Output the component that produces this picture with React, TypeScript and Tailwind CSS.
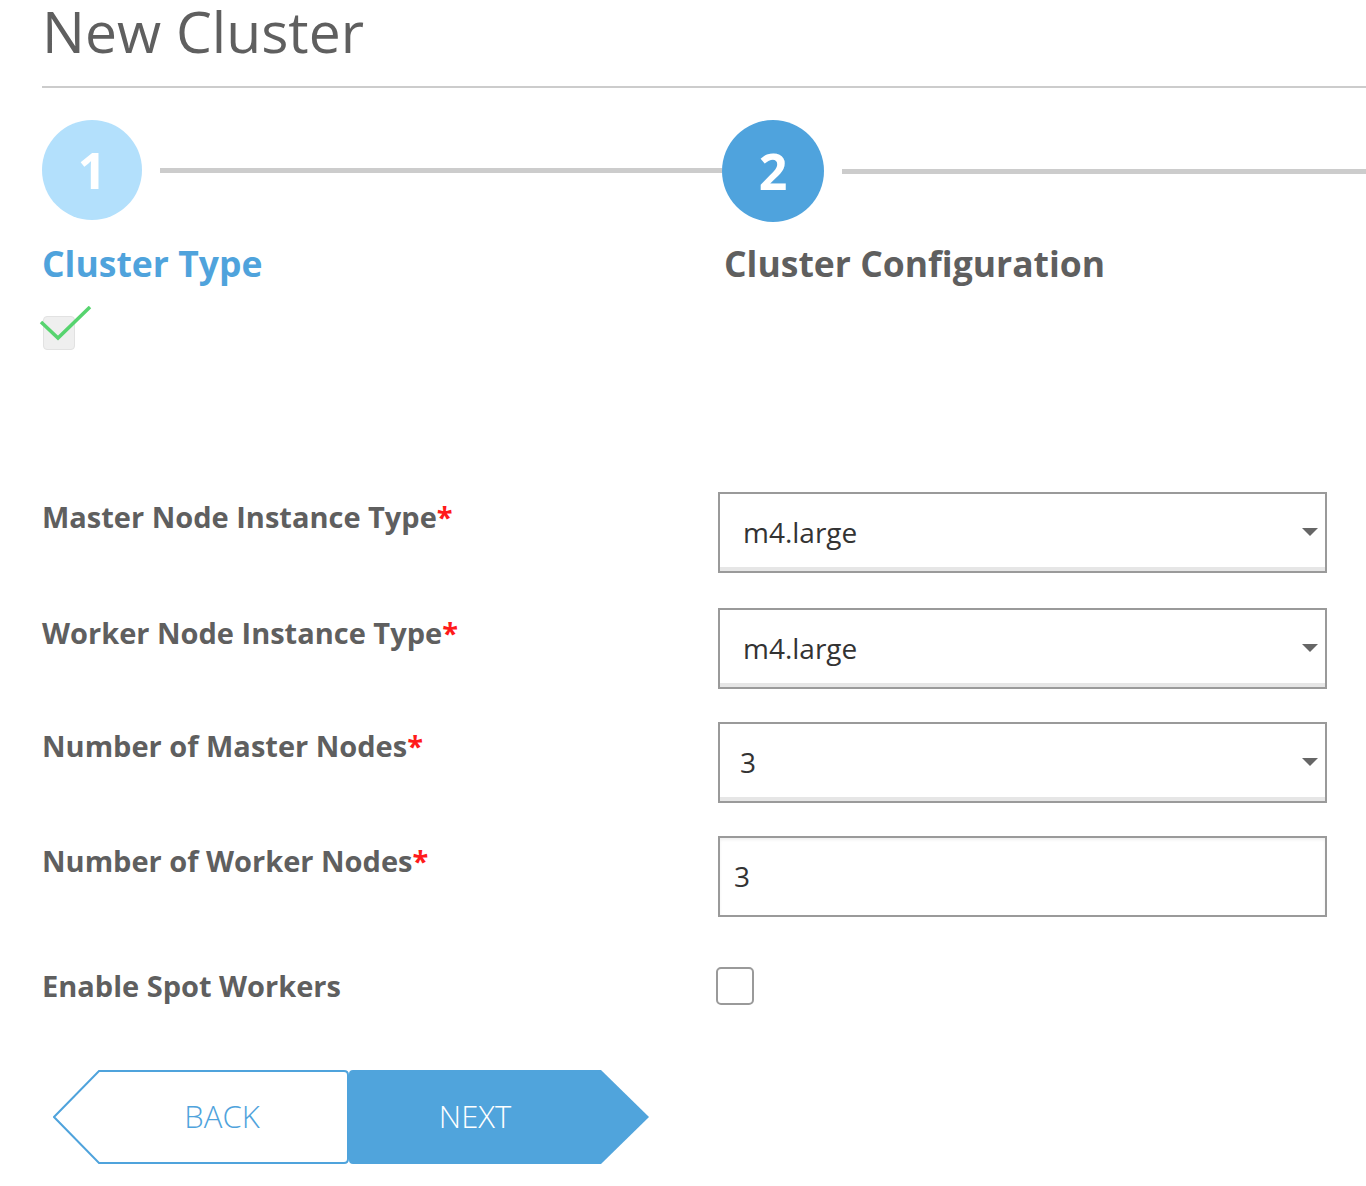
import React from "react";

const font = { fontFamily: '"Open Sans", "Liberation Sans", sans-serif' };

function Caret() {
  return (
    <svg width="18" height="10" viewBox="0 0 18 10" className="shrink-0">
      <path d="M1 1 L17 1 L9 9 Z" fill="#666" />
    </svg>
  );
}

function SelectBox({ value, pad = "pl-[23px]" }: { value: string; pad?: string }) {
  return (
    <div className="flex h-[81px] w-[609px] items-center justify-between border-2 border-[#9a9a9a] bg-white pr-[6px] shadow-[inset_0_-4px_0_#e6e6e6]">
      <span className={`${pad} text-[28px] text-[#333]`}>{value}</span>
      <Caret />
    </div>
  );
}

function Label({ text, req = true }: { text: string; req?: boolean }) {
  return (
    <div className="w-[676px] text-[29px] font-bold leading-none text-[#5f5f5f]">
      {text}
      {req && <span className="text-[#ff1a1a]">*</span>}
    </div>
  );
}

export default function App() {
  return (
    <div className="min-h-[1186px] w-[1366px] bg-white" style={font}>
      <div className="pl-[42px]">
        <h1 className="pt-[3px] text-[57px] font-normal leading-none text-[#5f5f5f]">New Cluster</h1>
        <div className="mt-[26px] h-[2px] bg-[#cccccc]" />

        {/* Stepper */}
        <div className="mt-[32px] flex">
          <div className="w-[680px]">
            <div className="flex items-center">
              <div className="flex h-[100px] w-[100px] shrink-0 items-center justify-center rounded-full bg-[#b3e0fc] text-[50px] font-bold text-white">
                1
              </div>
              <div className="ml-[18px] h-[5px] flex-1 bg-[#cccccc]" />
            </div>
            <div className="mt-[26px] text-[35.5px] font-bold leading-none text-[#4fa3dc]">Cluster Type</div>
            <div className="relative mt-[26px] h-[34px] w-[34px]">
              <div className="absolute left-[1px] top-[8px] h-[34px] w-[32px] rounded-[4px] border border-[#e2e2e2] bg-[#efefef]" />
              <svg className="absolute -left-[3px] -top-[2px]" width="56" height="42" viewBox="0 0 56 42">
                <path d="M2 16 L19 32 L51 1" stroke="#57d46f" strokeWidth="3.5" fill="none" />
              </svg>
            </div>
          </div>
          <div className="flex-1">
            <div className="flex items-center">
              <div className="flex h-[102px] w-[102px] shrink-0 items-center justify-center rounded-full bg-[#4fa3dd] text-[50px] font-bold text-white">
                2
              </div>
              <div className="ml-[18px] h-[5px] flex-1 bg-[#cccccc]" />
            </div>
            <div className="ml-[2px] mt-[24px] text-[35.5px] font-bold leading-none text-[#5f5f5f]">Cluster Configuration</div>
          </div>
        </div>

        {/* Form */}
        <div className="mt-[150px] flex flex-col">
          <div className="flex items-start">
            <div className="pt-[10px]"><Label text="Master Node Instance Type" /></div>
            <SelectBox value="m4.large" />
          </div>
          <div className="mt-[35px] flex items-start">
            <div className="pt-[10px]"><Label text="Worker Node Instance Type" /></div>
            <SelectBox value="m4.large" />
          </div>
          <div className="mt-[33px] flex items-start">
            <div className="pt-[9px]"><Label text="Number of Master Nodes" /></div>
            <SelectBox value="3" pad="pl-[20px]" />
          </div>
          <div className="mt-[33px] flex items-start">
            <div className="pt-[10px]"><Label text="Number of Worker Nodes" /></div>
            <div className="flex h-[81px] w-[609px] items-center border-2 border-[#9a9a9a] bg-white pl-[14px] text-[28px] text-[#333] shadow-[inset_0_2px_3px_#f0f0f0]">
              3
            </div>
          </div>
          <div className="mt-[50px] flex items-center">
            <Label text="Enable Spot Workers" req={false} />
            <div className="-ml-[2px] h-[38px] w-[38px] rounded-[5px] border-2 border-[#9a9a9a] bg-white" />
          </div>
        </div>

        {/* Buttons */}
        <div className="mt-[65px] flex pl-[11px]">
          <button className="relative flex h-[94px] w-[296px] items-center justify-center pl-[42px]">
            <svg className="absolute inset-0" width="296" height="94" viewBox="0 0 296 94">
              <path
                d="M46 1 L291 1 Q295 1 295 5 L295 89 Q295 93 291 93 L46 93 L1 47 Z"
                fill="#fff"
                stroke="#4fa3dc"
                strokeWidth="2"
              />
            </svg>
            <span className="relative text-[31px] font-light text-[#4fa3dc]">BACK</span>
          </button>
          <button className="relative flex h-[94px] w-[300px] items-center justify-center pr-[48px]">
            <svg className="absolute inset-0" width="300" height="94" viewBox="0 0 300 94">
              <path d="M4 0 L252 0 L300 47 L252 94 L4 94 Q0 94 0 90 L0 4 Q0 0 4 0 Z" fill="#50a4dc" />
            </svg>
            <span className="relative text-[31px] font-light text-white">NEXT</span>
          </button>
        </div>
      </div>
    </div>
  );
}
